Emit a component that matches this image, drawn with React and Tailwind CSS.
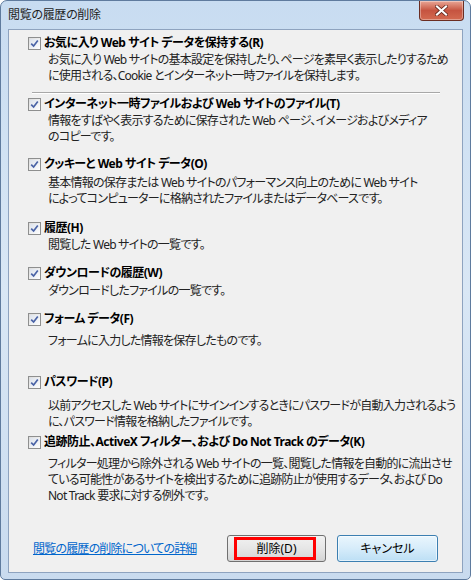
import React from 'react';

const items = [
  { mt: 'mt-[5px]', title: 'お気に入り Web サイト データを保持する(R)', dmt: 'mt-[1px]', desc: ['お気に入り Web サイトの基本設定を保持したり、ページを素早く表示したりするため', 'に使用される、Cookie とインターネット一時ファイルを保持します。'], sep: true },
  { mt: 'mt-[2px]', title: 'インターネット一時ファイルおよび Web サイトのファイル(T)', dmt: 'mt-[1px]', desc: ['情報をすばやく表示するために保存された Web ページ、イメージおよびメディア', 'のコピーです。'] },
  { mt: 'mt-[11px]', title: 'クッキーと Web サイト データ(O)', dmt: 'mt-[3px]', desc: ['基本情報の保存または Web サイトのパフォーマンス向上のために Web サイト', 'によってコンピューターに格納されたファイルまたはデータベースです。'] },
  { mt: 'mt-[13px]', title: '履歴(H)', dmt: 'mt-[1px]', desc: ['閲覧した Web サイトの一覧です。'] },
  { mt: 'mt-[12px]', title: 'ダウンロードの履歴(W)', dmt: 'mt-[2px]', desc: ['ダウンロードしたファイルの一覧です。'] },
  { mt: 'mt-[12px]', title: 'フォーム データ(F)', dmt: 'mt-[6px]', desc: ['フォームに入力した情報を保存したものです。'] },
  { mt: 'mt-[25px]', title: 'パスワード(P)', dmt: 'mt-[8px]', desc: ['以前アクセスした Web サイトにサインインするときにパスワードが自動入力されるよう', 'に、パスワード情報を格納したファイルです。'] },
  { mt: 'mt-[4px]', title: '追跡防止、ActiveX フィルター、および Do Not Track のデータ(K)', dmt: 'mt-[6px]', desc: ['フィルター処理から除外される Web サイトの一覧、閲覧した情報を自動的に流出させ', 'ている可能性があるサイトを検出するために追跡防止が使用するデータ、および Do', 'Not Track 要求に対する例外です。'] },
];

function Check() {
  return (
    <div className="w-[13px] h-[13px] shrink-0 border border-[#8e8f8f] bg-gradient-to-br from-[#dcdcdc] to-[#ffffff] p-[1px]">
      <div className="w-full h-full bg-gradient-to-br from-[#dde3ec] to-[#fbfbfc] flex items-center justify-center">
        <svg width="9" height="9" viewBox="0 0 9 9">
          <path d="M1.2 4.6 L3.6 7 L7.8 1.6" fill="none" stroke="#4a63a6" strokeWidth="1.7" />
        </svg>
      </div>
    </div>
  );
}

function Item({ it }) {
  return (
    <div className={it.mt}>
      <div className="flex items-center h-[16px] pl-[19px]">
        <Check />
        <span className="ml-[3px] font-bold text-[12px] tracking-[-0.5px] text-black whitespace-nowrap">{it.title}</span>
      </div>
      <div className={`${it.dmt} pl-[39px] text-[12px] tracking-[-0.75px] leading-[16px] text-[#222] whitespace-nowrap`}>
        {it.desc.map((l) => <div key={l}>{l}</div>)}
      </div>
      {it.sep && <div className="mt-[8px] ml-[23px] w-[408px] border-t border-[#a8a8a8] border-b border-b-white" />}
    </div>
  );
}

export default function App() {
  return (
    <div className="w-[471px] h-[580px] overflow-hidden bg-white [font-family:'Noto_Sans','Noto_Sans_CJK_JP',sans-serif] [font-feature-settings:'palt']">
      <div className="w-full h-full rounded-t-[7px] rounded-b-[5px] border border-[#5f7b9e] bg-gradient-to-b from-[#c8dcf1] via-[#d9e7f5] to-[#c9dbef] flex flex-col">
        <div className="h-[28px] flex items-start justify-between pl-[7px] pr-[6px] shrink-0">
          <span className="mt-[7px] text-[12px] tracking-[-0.3px] text-[#1e1e1e] leading-[14px]">閲覧の履歴の削除</span>
          <div className="w-[45px] h-[20px] rounded-b-[4px] border border-[#6b2d22] border-t-0 bg-gradient-to-b from-[#e8a696] via-[#c65440] to-[#d36a50] flex items-center justify-center shadow-[inset_0_0_0_1px_rgba(255,255,255,0.35)]">
            <svg width="13" height="11" viewBox="0 0 13 11">
              <path d="M2 1.5 L11 9.5 M11 1.5 L2 9.5" stroke="#5a1f15" strokeWidth="3.6" strokeLinecap="square" />
              <path d="M2 1.5 L11 9.5 M11 1.5 L2 9.5" stroke="#ffffff" strokeWidth="2.2" strokeLinecap="square" />
            </svg>
          </div>
        </div>
        <div className="mx-[7px] mb-[6px] flex-1 border border-[#8ea3bf] bg-[#f0f0f0] flex flex-col">
          {items.map((it) => <Item key={it.title} it={it} />)}
          <div className="mt-auto mb-[10px] flex items-center">
            <a className="ml-[24px] text-[12px] tracking-[-0.8px] text-[#0066cc] underline whitespace-nowrap">閲覧の履歴の削除についての詳細</a>
            <div className="ml-auto relative w-[99px] h-[27px] rounded-[3px] border border-[#707070] bg-gradient-to-b from-[#f2f2f2] via-[#e6e6e6] to-[#d4d4d4] flex items-center justify-center text-[12px] text-black">
              削除(D)
              <div className="absolute left-[6px] top-[1px] w-[82px] h-[23px] border-[3px] border-[#ff0000]" />
            </div>
            <div className="ml-[11px] mr-[24px] w-[101px] h-[27px] rounded-[3px] border border-[#3c7fb1] bg-gradient-to-b from-[#eaf6fd] via-[#d6ecfa] to-[#bcdff5] flex items-center justify-center text-[12px] text-black shadow-[inset_0_0_0_1px_rgba(255,255,255,0.6)]">
              キャンセル
            </div>
          </div>
        </div>
      </div>
    </div>
  );
}
